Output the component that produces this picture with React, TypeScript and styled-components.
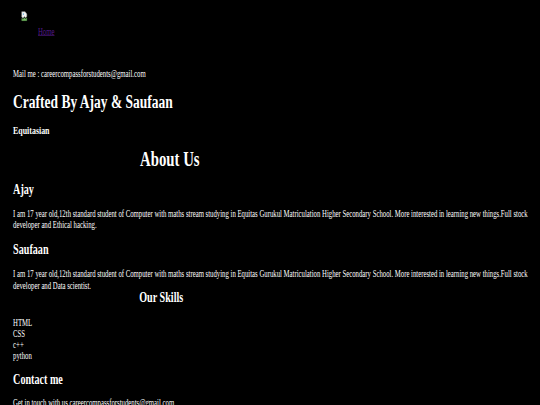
import React from "react";
import styled, { createGlobalStyle } from "styled-components";

const Global = createGlobalStyle`
  html, body { margin: 0; padding: 0; background: #000; overflow: hidden; }
  body { width: 540px; height: 405px; }
`;

const Viewport = styled.div`
  width: 540px;
  height: 405px;
  overflow: hidden;
  background: #000;
`;

const Page = styled.div`
  width: 1280px;
  height: 675px;
  box-sizing: border-box;
  padding: 0 0 0 31px;
  transform: scale(0.421875, 0.6);
  transform-origin: 0 0;
  font-family: "Liberation Serif", "Times New Roman", serif;
  color: #fff;
  background: #000;
`;

const Nav = styled.nav`
  padding: 18px 0 0 19px;
  display: flex;
  align-items: flex-end;
  font-size: 16px;
  line-height: 18.4px;
`;

const BrokenImage = styled.span`
  display: block;
  width: 40px;
  height: 37px;
`;

const NavLink = styled.a`
  color: #551a8b;
  text-decoration: underline;
  font-size: 16px;
  line-height: 18.4px;
  margin-bottom: -7px;
`;

const Text = styled.p<{ $top: number }>`
  margin: ${(p) => p.$top}px 0 0;
  font-size: 16px;
  line-height: 18.4px;
`;

const Title = styled.h1<{ $top: number; $indent?: number; $size?: number }>`
  margin: ${(p) => p.$top}px 0 0;
  padding-left: ${(p) => p.$indent ?? 0}px;
  font-size: ${(p) => p.$size ?? 32}px;
  line-height: normal;
  font-weight: bold;
`;

const Heading = styled.h2<{ $top: number; $indent?: number }>`
  margin: ${(p) => p.$top}px 0 0;
  padding-left: ${(p) => p.$indent ?? 0}px;
  font-size: 24px;
  line-height: 27.6px;
  font-weight: bold;
`;

const SubHeading = styled.h3<{ $top: number }>`
  margin: ${(p) => p.$top}px 0 0;
  font-size: 18.72px;
  line-height: 21.5px;
  font-weight: bold;
`;

const SkillList = styled.ul`
  margin: 18px 0 0;
  padding: 0;
  list-style: none;
  font-size: 16px;
  line-height: 18.4px;
`;

const Icon = () => (
  <svg width="16" height="18" viewBox="0 0 16 18">
    <path d="M1.5 1.5h8l4 4v4l-3 2-3-2-3 3-3-2z" fill="#f4f4f4" stroke="#a0a0a0" strokeWidth="1" />
    <path d="M1.5 12.5l3 2 3-3 3 2 3-2v5h-12z" fill="#7cc06a" stroke="#5a9a4a" strokeWidth="0.8" />
    <circle cx="5.5" cy="5.5" r="1.4" fill="#6aaee0" />
  </svg>
);

export default function App() {
  return (
    <Viewport>
      <Global />
      <Page>
        <Nav>
          <BrokenImage>
            <Icon />
          </BrokenImage>
          <NavLink href="#">Home</NavLink>
        </Nav>
        <Text $top={59}>Mail me : careercompassforstudents@gmail.com</Text>
        <Title $top={19}>Crafted By Ajay &amp; Saufaan</Title>
        <SubHeading $top={18.5}>Equitasian</SubHeading>
        <Title $top={17.5} $indent={301} $size={35}>About Us</Title>
        <Heading $top={16.5}>Ajay</Heading>
        <Text $top={17.2}>
          I am 17 year old,12th standard student of Computer with maths stream studying in Equitas Gurukul Matriculation Higher Secondary School. More interested in learning new things.Full stock developer and Ethical hacking.
        </Text>
        <Heading $top={18.4}>Saufaan</Heading>
        <Text $top={18.2}>
          I am 17 year old,12th standard student of Computer with maths stream studying in Equitas Gurukul Matriculation Higher Secondary School. More interested in learning new things.Full stock developer and Data scientist.
        </Text>
        <Heading $top={-1.7} $indent={299}>Our Skills</Heading>
        <SkillList>
          <li>HTML</li>
          <li>CSS</li>
          <li>c++</li>
          <li>python</li>
        </SkillList>
        <Heading $top={16.7}>Contact me</Heading>
        <Text $top={16.6}>Get in touch with us careercompassforstudents@gmail.com</Text>
      </Page>
    </Viewport>
  );
}
